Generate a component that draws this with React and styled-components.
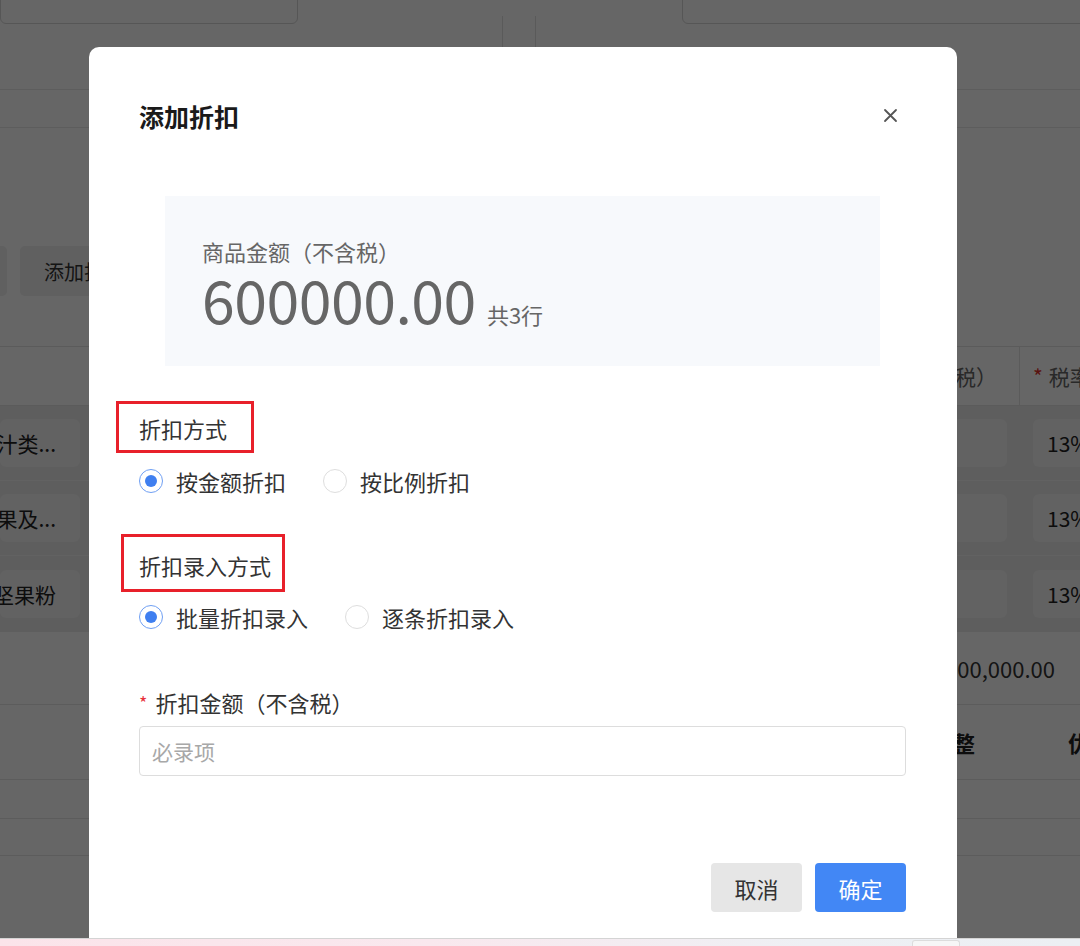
import React, { useState } from "react";
import styled, { createGlobalStyle } from "styled-components";

const FONT = `"Noto Sans CJK SC", "Noto Sans", "Liberation Sans", sans-serif`;

const GlobalStyle = createGlobalStyle`
  * { box-sizing: border-box; }
  html, body { margin: 0; padding: 0; background: #fff; }
  body { font-family: ${FONT}; color: #333; }
`;

const Screen = styled.div`
  width: 1080px;
  height: 946px;
  display: flex;
  flex-direction: column;
  overflow: hidden;
`;

const Viewport = styled.div`
  position: relative;
  height: 938px;
  overflow: hidden;
  flex: none;
`;

const Taskbar = styled.div`
  flex: 1;
  display: flex;
  justify-content: flex-end;
  align-items: flex-start;
  padding-right: 120px;
  background: linear-gradient(90deg, #fbe4ea 0%, #f9e8ee 40%, #eef0f4 75%, #eceff3 100%);
  border-top: 1px solid #d4d4d4;
`;

const TaskTab = styled.div`
  width: 48px;
  height: 6px;
  margin-top: 1px;
  border: 1px solid #dcdcdc;
  border-bottom: none;
  border-radius: 3px 3px 0 0;
  background: #f6f6f6;
`;

/* ---------- page behind the dialog ---------- */

const Page = styled.div`
  width: 1080px;
  height: 938px;
  background: #fff;
  display: flex;
  flex-direction: column;
  overflow: hidden;
`;

const FormRow = styled.div`
  height: ${(p) => p.h}px;
  flex: none;
  display: flex;
  border-bottom: 1px solid #e8e8e8;
`;

const FieldBox = styled.div`
  height: 44px;
  margin-top: -20px;
  width: ${(p) => (p.w ? `${p.w}px` : "auto")};
  flex: ${(p) => (p.w ? "none" : "1")};
  margin-right: ${(p) => (p.w ? "0" : "-12px")};
  border: 1px solid #d6d6d6;
  border-radius: 6px;
`;

const Gap = styled.div`
  width: ${(p) => p.w}px;
  flex: none;
`;

const SplitCell = styled.div`
  width: 34px;
  flex: none;
  margin-top: 16px;
  border-left: 1px solid #e2e2e2;
  border-right: 1px solid #e2e2e2;
`;

const Spacer = styled.div`
  height: ${(p) => p.h}px;
  flex: none;
`;

const Toolbar = styled.div`
  height: 50px;
  flex: none;
  display: flex;
  gap: 13px;
`;

const PageButton = styled.div`
  width: ${(p) => p.w}px;
  margin-left: ${(p) => p.ml || 0}px;
  height: 50px;
  flex: none;
  background: #efefef;
  border-radius: 5px;
  display: flex;
  align-items: center;
  padding-left: 24px;
  font-size: 20px;
  color: #333;
  white-space: nowrap;
  overflow: hidden;
`;

const TableHead = styled.div`
  height: 60px;
  flex: none;
  display: flex;
  justify-content: flex-end;
  border-top: 1px solid #e3e3e3;
  border-bottom: 1px solid #e3e3e3;
  font-size: 21px;
  color: #666;
`;

const HeadCell = styled.div`
  width: ${(p) => p.w}px;
  flex: none;
  display: flex;
  align-items: center;
  justify-content: ${(p) => (p.right ? "flex-end" : "flex-start")};
  padding: ${(p) => (p.right ? "0 22px 0 0" : "0 0 0 13px")};
  border-right: ${(p) => (p.right ? "1px solid #e3e3e3" : "none")};
  white-space: nowrap;
  overflow: hidden;
`;

const Star = styled.span`
  color: #e0302a;
  margin-right: 6px;
`;

const Band = styled.div`
  flex: none;
  background: #ebebeb;
  display: flex;
  flex-direction: column;
`;

const BandRow = styled.div`
  height: 75px;
  display: flex;
  align-items: center;
  border-bottom: 1px solid #f4f4f4;
  &:last-child { border-bottom: none; height: 76px; }
`;

const CellInput = styled.div`
  height: 48px;
  width: ${(p) => p.w}px;
  flex: none;
  margin-left: ${(p) => p.ml || 0}px;
  margin-right: ${(p) => p.mr || 0}px;
  background: #f4f4f4;
  border-radius: 6px;
  display: flex;
  align-items: center;
  justify-content: ${(p) => (p.end ? "flex-end" : "flex-start")};
  padding: ${(p) => (p.end ? "0 24px 0 0" : "0 0 0 14px")};
  font-size: 21px;
  color: #222;
  white-space: nowrap;
  overflow: hidden;
`;

const Fill = styled.div`
  flex: 1;
`;

const TotalRow = styled.div`
  height: 73px;
  flex: none;
  display: flex;
  align-items: center;
  justify-content: flex-end;
  padding-right: 25px;
  border-bottom: 1px solid #e6e6e6;
  font-size: 22px;
  color: #333;
`;

const SubHead = styled.div`
  height: 75px;
  flex: none;
  display: flex;
  align-items: center;
  border-bottom: 1px solid #e6e6e6;
  font-size: 22px;
  font-weight: 700;
  color: #222;
  white-space: nowrap;
`;

const SubHeadCell = styled.div`
  width: ${(p) => p.w}px;
  flex: none;
  text-align: right;
  overflow: hidden;
`;

const PlainRow = styled.div`
  height: ${(p) => p.h}px;
  flex: none;
  border-bottom: 1px solid #e6e6e6;
`;

/* ---------- dialog ---------- */

const Overlay = styled.div`
  position: absolute;
  inset: 0;
  background: rgba(0, 0, 0, 0.6);
  display: flex;
  align-items: flex-start;
  padding: 47px 0 0 89px;
`;

const Dialog = styled.div`
  width: 868px;
  min-height: 960px;
  flex: none;
  background: #fff;
  border-radius: 10px 10px 0 0;
  padding: 0 51px 0 50px;
  display: flex;
  flex-direction: column;
`;

const Header = styled.div`
  display: flex;
  align-items: center;
  justify-content: space-between;
  margin-top: 52px;
  height: 34px;
`;

const Title = styled.h2`
  margin: 0;
  font-size: 25px;
  font-weight: 700;
  color: #1a1a1a;
  line-height: 34px;
`;

const CloseButton = styled.button`
  width: 24px;
  height: 24px;
  margin-right: 4px;
  margin-top: -2px;
  padding: 0;
  border: none;
  background: none;
  display: flex;
  align-items: center;
  justify-content: center;
  cursor: pointer;
`;

const Summary = styled.div`
  margin: 63px 26px 0;
  height: 170px;
  background: #f7f9fc;
  padding: 38px 0 0 37px;
`;

const SummaryLabel = styled.div`
  font-size: 22px;
  line-height: 34px;
  color: #666;
`;

const AmountLine = styled.div`
  display: flex;
  align-items: baseline;
  margin-top: -1px;
  color: #666;
`;

const Amount = styled.span`
  font-size: 59px;
  line-height: 64px;
  letter-spacing: -0.5px;
`;

const RowCount = styled.span`
  font-size: 22px;
  margin-left: 11px;
`;

const SectionLabel = styled.div`
  align-self: flex-start;
  margin-top: ${(p) => p.mt}px;
  margin-left: ${(p) => p.ml}px;
  padding: ${(p) => p.pad};
  border: 3px solid #e8202a;
  font-size: 22px;
  line-height: 33px;
  color: #333;
`;

const RadioGroup = styled.div`
  display: flex;
  align-items: center;
  gap: 37px;
  margin-top: ${(p) => p.mt}px;
  height: 32px;
`;

const RadioOption = styled.label`
  display: flex;
  align-items: center;
  gap: 13px;
  font-size: 22px;
  color: #333;
  cursor: pointer;
`;

const RadioDot = styled.span`
  width: 24px;
  height: 24px;
  border-radius: 50%;
  border: 1px solid ${(p) => (p.checked ? "#6f9ff3" : "#dedede")};
  display: flex;
  align-items: center;
  justify-content: center;
  &::after {
    content: "";
    width: 12px;
    height: 12px;
    border-radius: 50%;
    background: ${(p) => (p.checked ? "#3f7ff0" : "transparent")};
  }
`;

const FieldLabel = styled.div`
  margin-top: 53px;
  font-size: 22px;
  line-height: 33px;
  color: #333;
  display: flex;
  align-items: center;
`;

const RequiredMark = styled.span`
  color: #e8303a;
  font-size: 18px;
  margin-right: 8px;
`;

const TextInput = styled.input`
  margin-top: 7px;
  height: 50px;
  width: 100%;
  border: 1px solid #dddddd;
  border-radius: 4px;
  padding: 0 12px;
  font-family: ${FONT};
  font-size: 21px;
  color: #333;
  outline: none;
  &::placeholder { color: #a8a8a8; }
`;

const Footer = styled.div`
  margin-top: 87px;
  display: flex;
  justify-content: flex-end;
  gap: 13px;
`;

const Button = styled.button`
  width: 91px;
  height: 49px;
  border: none;
  border-radius: 4px;
  font-family: ${FONT};
  font-size: 22px;
  background: ${(p) => (p.primary ? "#4287f5" : "#e6e6e6")};
  color: ${(p) => (p.primary ? "#fff" : "#333")};
  cursor: pointer;
`;

const Radio = ({ checked, children, onClick }) => (
  <RadioOption onClick={onClick}>
    <RadioDot checked={checked} />
    {children}
  </RadioOption>
);

const CloseIcon = () => (
  <svg width="15" height="15" viewBox="0 0 15 15">
    <path d="M2 2 L13 13 M13 2 L2 13" stroke="#555" strokeWidth="1.8" strokeLinecap="round" />
  </svg>
);

const rows = ["汁类...", "果及...", "坚果粉"];

const BackgroundPage = () => (
  <Page>
    <FormRow h={90}>
      <FieldBox w={298} />
      <Gap w={204} />
      <SplitCell />
      <Gap w={146} />
      <FieldBox />
    </FormRow>
    <FormRow h={38} />
    <Spacer h={118} />
    <Toolbar>
      <PageButton w={60} ml={-53} />
      <PageButton w={140}>添加折扣</PageButton>
    </Toolbar>
    <Spacer h={50} />
    <TableHead>
      <HeadCell w={160} right>
        金额（含税）
      </HeadCell>
      <HeadCell w={60}>
        <Star>*</Star>税率
      </HeadCell>
    </TableHead>
    <Band>
      {rows.map((name) => (
        <BandRow key={name}>
          <CellInput w={80} end>
            {name}
          </CellInput>
          <Fill />
          <CellInput w={127} />
          <CellInput w={80} ml={26} mr={-33}>
            13%
          </CellInput>
        </BandRow>
      ))}
    </Band>
    <TotalRow>600,000.00</TotalRow>
    <SubHead>
      <Fill />
      <SubHeadCell w={80}>调整</SubHeadCell>
      <Gap w={93} />
      <SubHeadCell w={12}>优惠</SubHeadCell>
    </SubHead>
    <PlainRow h={39} />
    <PlainRow h={37} />
  </Page>
);

const App = () => {
  const [mode, setMode] = useState("amount");
  const [entry, setEntry] = useState("batch");

  return (
    <Screen>
      <GlobalStyle />
      <Viewport>
        <BackgroundPage />
        <Overlay>
          <Dialog>
            <Header>
              <Title>添加折扣</Title>
              <CloseButton aria-label="关闭">
                <CloseIcon />
              </CloseButton>
            </Header>

            <Summary>
              <SummaryLabel>商品金额（不含税）</SummaryLabel>
              <AmountLine>
                <Amount>600000.00</Amount>
                <RowCount>共3行</RowCount>
              </AmountLine>
            </Summary>

            <SectionLabel mt={35} ml={-23} pad="8px 24px 5px 20px">
              折扣方式
            </SectionLabel>
            <RadioGroup mt={12}>
              <Radio checked={mode === "amount"} onClick={() => setMode("amount")}>
                按金额折扣
              </Radio>
              <Radio checked={mode === "ratio"} onClick={() => setMode("ratio")}>
                按比例折扣
              </Radio>
            </RadioGroup>

            <SectionLabel mt={37} ml={-18} pad="12px 11px 7px 15px">
              折扣录入方式
            </SectionLabel>
            <RadioGroup mt={9}>
              <Radio checked={entry === "batch"} onClick={() => setEntry("batch")}>
                批量折扣录入
              </Radio>
              <Radio checked={entry === "each"} onClick={() => setEntry("each")}>
                逐条折扣录入
              </Radio>
            </RadioGroup>

            <FieldLabel>
              <RequiredMark>*</RequiredMark>
              折扣金额（不含税）
            </FieldLabel>
            <TextInput placeholder="必录项" />

            <Footer>
              <Button>取消</Button>
              <Button primary>确定</Button>
            </Footer>
          </Dialog>
        </Overlay>
      </Viewport>
      <Taskbar>
        <TaskTab />
      </Taskbar>
    </Screen>
  );
};

export default App;
